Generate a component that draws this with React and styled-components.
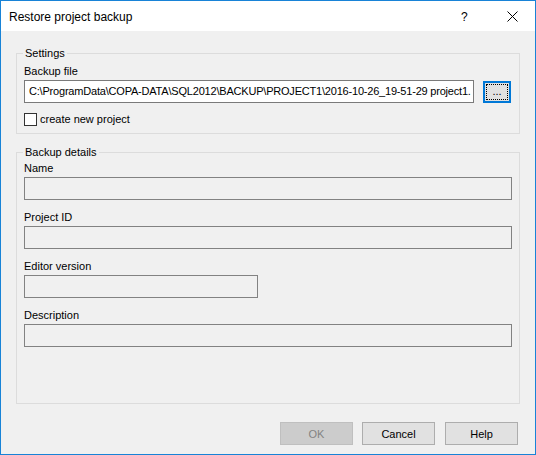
import React from "react";
import styled, { createGlobalStyle } from "styled-components";

const Global = createGlobalStyle`
  html, body { margin: 0; padding: 0; background: #f0f0f0; }
  * { box-sizing: border-box; }
`;

const Window = styled.div`
  width: 536px;
  height: 455px;
  border: 1px solid #1883d7;
  background: #f0f0f0;
  display: flex;
  flex-direction: column;
  font-family: "Liberation Sans", Arial, sans-serif;
  font-size: 11px;
  color: #000;
`;

const TitleBar = styled.div`
  height: 30px;
  background: #fff;
  display: flex;
  align-items: center;
  padding-left: 8px;
  flex-shrink: 0;
`;

const Title = styled.div`
  flex: 1;
  font-size: 12px;
  line-height: 14px;
  margin-top: 1px;
`;

const HelpGlyph = styled.div`
  width: 12px;
  font-size: 12px;
  line-height: 14px;
  margin-right: 33px;
  margin-top: 1px;
`;

const CloseBtn = styled.div`
  width: 12px;
  height: 12px;
  margin-right: 17px;
  display: flex;
  align-items: center;
  justify-content: center;
`;

const Body = styled.div`
  flex: 1;
  display: flex;
  flex-direction: column;
  padding: 15px 15px 9px 15px;
`;

const Group = styled.fieldset`
  margin: 0;
  padding: 0 7px ${(p) => p.$pb}px 7px;
  border: 1px solid #dcdcdc;
  min-width: 0;
  display: flex;
  flex-direction: column;
  ${(p) => (p.$grow ? "flex: 1;" : "")}
  ${(p) => (p.$mt ? `margin-top: ${p.$mt}px;` : "")}
`;

const Legend = styled.legend`
  padding: 0 2px;
  margin-left: -1px;
  line-height: 14px;
`;

const Label = styled.div`
  line-height: 14px;
  margin-top: ${(p) => p.$mt}px;
  margin-bottom: 2px;
`;

const FileRow = styled.div`
  display: flex;
  align-items: center;
  gap: 9px;
  padding-right: 1px;
`;

const TextBox = styled.div`
  height: 23px;
  border: 1px solid ${(p) => (p.$disabled ? "#828282" : "#7a7a7a")};
  background: ${(p) => (p.$disabled ? "#f0f0f0" : "#fff")};
  padding: 0 1px 0 4px;
  line-height: 20px;
  white-space: nowrap;
  overflow: hidden;
  min-width: 0;
  ${(p) => (p.$tight ? "letter-spacing: -0.2px;" : "")}
  ${(p) => (p.$width ? `width: ${p.$width}px;` : "")}
  ${(p) => (p.$flex ? "flex: 1;" : "")}
`;

const BrowseButton = styled.div`
  width: 28px;
  height: 22px;
  border: 2px solid #0078d7;
  background: #e1e1e1;
  padding: 1px;
  display: flex;
  flex-shrink: 0;
`;

const FocusRect = styled.div`
  flex: 1;
  border: 1px dotted #000;
  display: flex;
  align-items: center;
  justify-content: center;
  line-height: 12px;
  padding-bottom: 1px;
`;

const CheckRow = styled.div`
  display: flex;
  align-items: center;
  gap: 3px;
  margin-top: 9px;
  height: 14px;
  line-height: 14px;
`;

const CheckBox = styled.div`
  width: 13px;
  height: 13px;
  border: 1px solid #333;
  background: #fff;
`;

const Field = styled.div`
  display: flex;
  flex-direction: column;
  align-items: ${(p) => (p.$short ? "flex-start" : "stretch")};
`;

const ButtonRow = styled.div`
  display: flex;
  justify-content: flex-end;
  gap: 9px;
  margin-top: 18px;
  padding-right: 2px;
`;

const Button = styled.div`
  width: 73px;
  height: 23px;
  display: flex;
  align-items: center;
  justify-content: center;
  border: 1px solid ${(p) => (p.$disabled ? "#bfbfbf" : "#adadad")};
  background: ${(p) => (p.$disabled ? "#cccccc" : "#e1e1e1")};
  color: ${(p) => (p.$disabled ? "#838383" : "#000")};
  margin-left: ${(p) => p.$ml || 0}px;
`;

export default function App() {
  return (
    <>
      <Global />
      <Window>
        <TitleBar>
          <Title>Restore project backup</Title>
          <HelpGlyph>?</HelpGlyph>
          <CloseBtn>
            <svg width="11" height="11" viewBox="0 0 11 11">
              <path d="M0.5 0.5 L10.5 10.5 M10.5 0.5 L0.5 10.5" stroke="#000" strokeWidth="1" fill="none" />
            </svg>
          </CloseBtn>
        </TitleBar>
        <Body>
          <Group $pb={7}>
            <Legend>Settings</Legend>
            <Label $mt={4}>Backup file</Label>
            <FileRow>
              <TextBox $flex $tight>
                C:\ProgramData\COPA-DATA\SQL2012\BACKUP\PROJECT1\2016-10-26_19-51-29 project1.
              </TextBox>
              <BrowseButton>
                <FocusRect>...</FocusRect>
              </BrowseButton>
            </FileRow>
            <CheckRow>
              <CheckBox />
              <span>create new project</span>
            </CheckRow>
          </Group>
          <Group $grow $mt={11} $pb={0}>
            <Legend>Backup details</Legend>
            <Field>
              <Label $mt={2}>Name</Label>
              <TextBox $disabled />
            </Field>
            <Field>
              <Label $mt={10}>Project ID</Label>
              <TextBox $disabled />
            </Field>
            <Field $short>
              <Label $mt={10}>Editor version</Label>
              <TextBox $disabled $width={234} />
            </Field>
            <Field>
              <Label $mt={10}>Description</Label>
              <TextBox $disabled />
            </Field>
          </Group>
          <ButtonRow>
            <Button $disabled>OK</Button>
            <Button>Cancel</Button>
            <Button $ml={1}>Help</Button>
          </ButtonRow>
        </Body>
      </Window>
    </>
  );
}
